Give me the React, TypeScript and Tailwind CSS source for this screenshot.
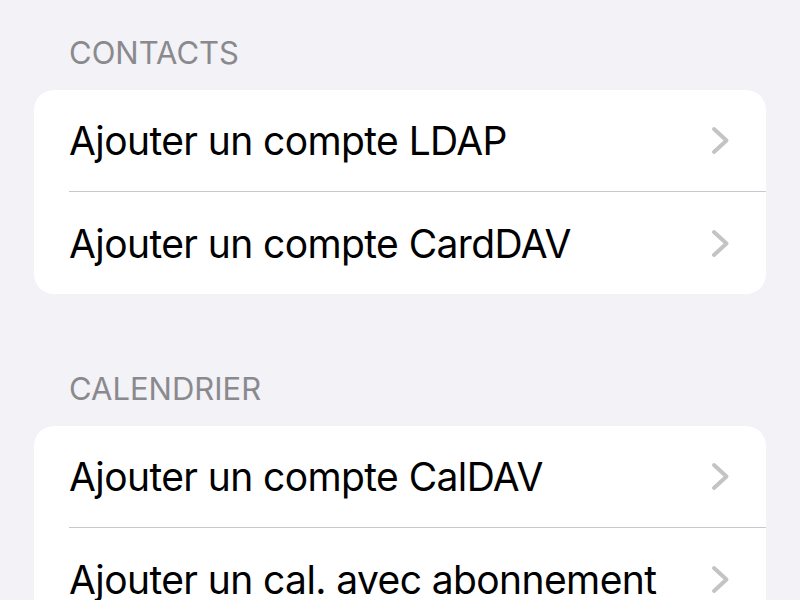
const sections = [
  { title: 'CONTACTS', rows: ['Ajouter un compte LDAP', 'Ajouter un compte CardDAV'] },
  { title: 'CALENDRIER', rows: ['Ajouter un compte CalDAV', 'Ajouter un cal. avec abonnement'] },
];

const Chevron = () => (
  <svg width="19" height="29" viewBox="0 0 19 29" fill="none" className="shrink-0">
    <path d="M3 3 L15.5 14.5 L3 26" stroke="#c4c4c7" strokeWidth="4" strokeLinecap="round" strokeLinejoin="round" />
  </svg>
);

export default function App() {
  return (
    <div className="w-[800px] h-[600px] overflow-hidden bg-[#f2f2f7] px-[34px] font-['Inter',sans-serif]">
      {sections.map((section, i) => (
        <div key={section.title} className={i === 0 ? 'pt-[34px]' : 'pt-[76px]'}>
          <div className="pl-[35px] pb-[18px] text-[31px] leading-[38px] text-[#8a8a8e]">
            {section.title}
          </div>
          <div className="bg-white rounded-[20px] overflow-hidden">
            {section.rows.map((row, j) => (
              <div key={row} className="pl-[35px]">
                <div
                  className={`flex items-center justify-between pr-[36px] ${
                    j < section.rows.length - 1 ? 'h-[102px] border-b border-[#c8c8cc]' : 'h-[102px]'
                  }`}
                >
                  <span className="text-[39px] leading-none text-black tracking-[-0.6px]">{row}</span>
                  <Chevron />
                </div>
              </div>
            ))}
          </div>
        </div>
      ))}
    </div>
  );
}
